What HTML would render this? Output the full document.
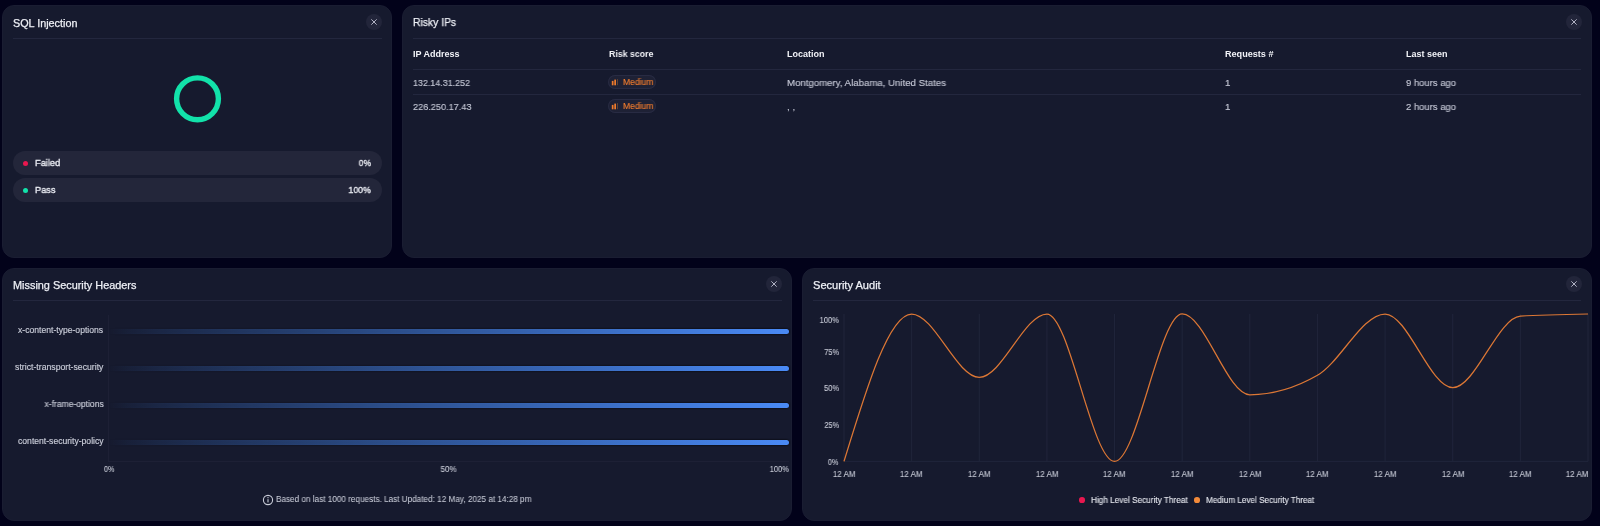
<!DOCTYPE html>
<html><head><meta charset="utf-8"><style>
*{margin:0;padding:0;box-sizing:border-box}
body *{will-change:transform}
html,body{width:1600px;height:526px;overflow:hidden;background:#02021a;font-family:"Liberation Sans",sans-serif}
.card{position:absolute;background:#161a2e;border:1px solid #1a1d32;border-radius:12px}
.t{position:absolute}
.sep{position:absolute;height:1px;background:#23273e}
.close{position:absolute;width:16px;height:16px;border-radius:50%;background:#22253a}
.close svg{position:absolute;left:0;top:0}
.rowsep{position:absolute;left:413px;width:1168px;height:1px;background:#23273e}
.badge{position:absolute;left:608px;width:48px;height:14px;border-radius:7px;background:#1e2135;box-shadow:inset 0 0 0 1px #282b43}
.leg{position:absolute;left:13px;width:369px;height:23.9px;border-radius:12px;background:#23263a}
.bar{position:absolute;left:108px;width:681px;height:5.2px;border-radius:3px;background:linear-gradient(90deg,rgba(74,138,245,0.000) 0%,rgba(74,138,245,0.072) 3%,rgba(74,138,245,0.136) 7%,rgba(74,138,245,0.204) 12%,rgba(74,138,245,0.299) 20%,rgba(74,138,245,0.405) 30%,rgba(74,138,245,0.503) 40%,rgba(74,138,245,0.595) 50%,rgba(74,138,245,0.699) 62%,rgba(74,138,245,0.806) 75%,rgba(74,138,245,0.901) 87%,rgba(74,138,245,1.000) 100%);filter:drop-shadow(0 0 1px #000)}
</style></head><body>
<div class="card" style="left:2px;top:5px;width:390.2px;height:253px"></div>
<div style="position:absolute;top:17.72px;font-size:10.8px;line-height:10.8px;color:#eef0f6;white-space:nowrap;-webkit-text-stroke:0.25px #eef0f6;left:12.90px;transform-origin:0 0;">SQL Injection</div>
<div class="close" style="left:366.3px;top:13.8px"><svg width="16" height="16" viewBox="0 0 16 16"><path d="M5.6 5.6L10.4 10.4M10.4 5.6L5.6 10.4" stroke="#b9bbcb" stroke-width="0.95" stroke-linecap="round"/></svg></div>
<div class="sep" style="left:13px;top:38px;width:369px"></div>
<svg style="position:absolute;left:0;top:0" width="400" height="200"><circle cx="197.5" cy="98.8" r="20.9" fill="none" stroke="#12e2aa" stroke-width="5.4"/></svg>
<div class="leg" style="top:151.1px"></div>
<div class="t" style="left:23.2px;top:160.60px;width:5.2px;height:5.2px;border-radius:50%;background:#e8174f"></div>
<div style="position:absolute;top:158.16px;font-size:9.7px;line-height:9.7px;color:#e9ebf2;white-space:nowrap;-webkit-text-stroke:0.35px #e9ebf2;left:35.00px;transform-origin:0 0;transform:scaleX(0.9572);">Failed</div>
<div style="position:absolute;top:158.16px;font-size:9.7px;line-height:9.7px;color:#e9ebf2;white-space:nowrap;-webkit-text-stroke:0.35px #e9ebf2;left:356.98px;width:14.02px;text-align:right;transform-origin:100% 0;transform:scaleX(0.8775);">0%</div>
<div class="leg" style="top:178px"></div>
<div class="t" style="left:23.2px;top:187.50px;width:5.2px;height:5.2px;border-radius:50%;background:#12e2aa"></div>
<div style="position:absolute;top:185.06px;font-size:9.7px;line-height:9.7px;color:#e9ebf2;white-space:nowrap;-webkit-text-stroke:0.35px #e9ebf2;left:35.00px;transform-origin:0 0;transform:scaleX(0.9498);">Pass</div>
<div style="position:absolute;top:185.06px;font-size:9.7px;line-height:9.7px;color:#e9ebf2;white-space:nowrap;-webkit-text-stroke:0.35px #e9ebf2;left:346.17px;width:24.81px;text-align:right;transform-origin:100% 0;transform:scaleX(0.9021);">100%</div>
<div class="card" style="left:402px;top:5px;width:1189.8px;height:253px"></div>
<div style="position:absolute;top:17.42px;font-size:10.8px;line-height:10.8px;color:#eef0f6;white-space:nowrap;-webkit-text-stroke:0.25px #eef0f6;left:413.00px;transform-origin:0 0;transform:scaleX(0.9582);">Risky IPs</div>
<div class="close" style="left:1565.8px;top:14px"><svg width="16" height="16" viewBox="0 0 16 16"><path d="M5.6 5.6L10.4 10.4M10.4 5.6L5.6 10.4" stroke="#b9bbcb" stroke-width="0.95" stroke-linecap="round"/></svg></div>
<div class="sep" style="left:413px;top:38px;width:1168px"></div>
<div style="position:absolute;top:50.05px;font-size:9px;line-height:9px;color:#f2f3f8;white-space:nowrap;font-weight:bold;left:413.00px;transform-origin:0 0;">IP Address</div>
<div style="position:absolute;top:50.05px;font-size:9px;line-height:9px;color:#f2f3f8;white-space:nowrap;font-weight:bold;left:608.80px;transform-origin:0 0;transform:scaleX(0.9750);">Risk score</div>
<div style="position:absolute;top:50.05px;font-size:9px;line-height:9px;color:#f2f3f8;white-space:nowrap;font-weight:bold;left:786.80px;transform-origin:0 0;">Location</div>
<div style="position:absolute;top:50.05px;font-size:9px;line-height:9px;color:#f2f3f8;white-space:nowrap;font-weight:bold;left:1225.30px;transform-origin:0 0;transform:scaleX(1.0101);">Requests #</div>
<div style="position:absolute;top:50.05px;font-size:9px;line-height:9px;color:#f2f3f8;white-space:nowrap;font-weight:bold;left:1406.30px;transform-origin:0 0;">Last seen</div>
<div class="rowsep" style="top:69.2px"></div><div class="rowsep" style="top:94px"></div>
<div style="position:absolute;top:77.87px;font-size:9.8px;line-height:9.8px;color:#c3c6d4;white-space:nowrap;-webkit-text-stroke:0.15px #c3c6d4;left:413.00px;transform-origin:0 0;transform:scaleX(0.9095);">132.14.31.252</div>
<div class="badge" style="top:75.00px"><svg style="position:absolute;left:3px;top:3px" width="10" height="8" viewBox="0 0 10 8"><rect x="0.8" y="2.9" width="1.7" height="4.4" fill="#ef7b2c"/><rect x="3.3" y="1.6" width="1.7" height="5.7" fill="#ef7b2c"/><rect x="6.1" y="1.1" width="0.9" height="6.1" fill="#6a4632"/></svg></div>
<div style="position:absolute;top:77.92px;font-size:8.8px;line-height:8.8px;color:#f07c2e;white-space:nowrap;-webkit-text-stroke:0.15px #f07c2e;left:622.80px;transform-origin:0 0;transform:scaleX(0.9717);">Medium</div>
<div style="position:absolute;top:77.87px;font-size:9.8px;line-height:9.8px;color:#c3c6d4;white-space:nowrap;-webkit-text-stroke:0.15px #c3c6d4;left:787.00px;transform-origin:0 0;transform:scaleX(0.9839);">Montgomery, Alabama, United States</div>
<div style="position:absolute;top:77.87px;font-size:9.8px;line-height:9.8px;color:#c3c6d4;white-space:nowrap;-webkit-text-stroke:0.15px #c3c6d4;left:1225.20px;transform-origin:0 0;">1</div>
<div style="position:absolute;top:77.87px;font-size:9.8px;line-height:9.8px;color:#c3c6d4;white-space:nowrap;-webkit-text-stroke:0.15px #c3c6d4;left:1406.40px;transform-origin:0 0;transform:scaleX(0.9663);">9 hours ago</div>
<div style="position:absolute;top:102.07px;font-size:9.8px;line-height:9.8px;color:#c3c6d4;white-space:nowrap;-webkit-text-stroke:0.15px #c3c6d4;left:413.00px;transform-origin:0 0;transform:scaleX(0.9334);">226.250.17.43</div>
<div class="badge" style="top:99.20px"><svg style="position:absolute;left:3px;top:3px" width="10" height="8" viewBox="0 0 10 8"><rect x="0.8" y="2.9" width="1.7" height="4.4" fill="#ef7b2c"/><rect x="3.3" y="1.6" width="1.7" height="5.7" fill="#ef7b2c"/><rect x="6.1" y="1.1" width="0.9" height="6.1" fill="#6a4632"/></svg></div>
<div style="position:absolute;top:102.12px;font-size:8.8px;line-height:8.8px;color:#f07c2e;white-space:nowrap;-webkit-text-stroke:0.15px #f07c2e;left:622.80px;transform-origin:0 0;transform:scaleX(0.9717);">Medium</div>
<div style="position:absolute;top:102.07px;font-size:9.8px;line-height:9.8px;color:#c3c6d4;white-space:nowrap;-webkit-text-stroke:0.1px #c3c6d4;left:787.00px;transform-origin:0 0;">, ,</div>
<div style="position:absolute;top:102.07px;font-size:9.8px;line-height:9.8px;color:#c3c6d4;white-space:nowrap;-webkit-text-stroke:0.15px #c3c6d4;left:1225.20px;transform-origin:0 0;">1</div>
<div style="position:absolute;top:102.07px;font-size:9.8px;line-height:9.8px;color:#c3c6d4;white-space:nowrap;-webkit-text-stroke:0.15px #c3c6d4;left:1406.40px;transform-origin:0 0;transform:scaleX(0.9663);">2 hours ago</div>
<div class="card" style="left:2px;top:268px;width:790.2px;height:252.5px"></div>
<div style="position:absolute;top:279.82px;font-size:10.8px;line-height:10.8px;color:#eef0f6;white-space:nowrap;-webkit-text-stroke:0.25px #eef0f6;left:13.40px;transform-origin:0 0;transform:scaleX(1.0084);">Missing Security Headers</div>
<div class="close" style="left:766px;top:276.4px"><svg width="16" height="16" viewBox="0 0 16 16"><path d="M5.6 5.6L10.4 10.4M10.4 5.6L5.6 10.4" stroke="#b9bbcb" stroke-width="0.95" stroke-linecap="round"/></svg></div>
<div class="sep" style="left:13px;top:300px;width:769px"></div>
<div style="position:absolute;left:108px;top:315px;width:1px;height:146px;background:#1d2035"></div>
<div style="position:absolute;left:108px;top:461px;width:681px;height:1px;background:#1d2035"></div>
<div style="position:absolute;top:325.89px;font-size:8.6px;line-height:8.6px;color:#cacdd9;white-space:nowrap;-webkit-text-stroke:0.15px #cacdd9;left:18.30px;width:85.09px;text-align:right;transform-origin:100% 0;">x-content-type-options</div>
<div class="bar" style="top:329.40px"></div>
<div style="position:absolute;top:362.79px;font-size:8.6px;line-height:8.6px;color:#cacdd9;white-space:nowrap;-webkit-text-stroke:0.15px #cacdd9;left:15.94px;width:87.45px;text-align:right;transform-origin:100% 0;transform:scaleX(1.0107);">strict-transport-security</div>
<div class="bar" style="top:366.30px"></div>
<div style="position:absolute;top:399.69px;font-size:8.6px;line-height:8.6px;color:#cacdd9;white-space:nowrap;-webkit-text-stroke:0.15px #cacdd9;left:43.67px;width:59.74px;text-align:right;transform-origin:100% 0;transform:scaleX(0.9912);">x-frame-options</div>
<div class="bar" style="top:403.20px"></div>
<div style="position:absolute;top:436.59px;font-size:8.6px;line-height:8.6px;color:#cacdd9;white-space:nowrap;-webkit-text-stroke:0.15px #cacdd9;left:17.83px;width:85.56px;text-align:right;transform-origin:100% 0;">content-security-policy</div>
<div class="bar" style="top:440.10px"></div>
<div style="position:absolute;top:464.69px;font-size:8.6px;line-height:8.6px;color:#cacdd9;white-space:nowrap;-webkit-text-stroke:0.1px #cacdd9;left:102.69px;width:12.43px;text-align:center;transform-origin:50% 0;transform:scaleX(0.8449);">0%</div>
<div style="position:absolute;top:464.69px;font-size:8.6px;line-height:8.6px;color:#cacdd9;white-space:nowrap;-webkit-text-stroke:0.1px #cacdd9;left:439.89px;width:17.21px;text-align:center;transform-origin:50% 0;transform:scaleX(0.9302);">50%</div>
<div style="position:absolute;top:464.69px;font-size:8.6px;line-height:8.6px;color:#cacdd9;white-space:nowrap;-webkit-text-stroke:0.1px #cacdd9;left:766.59px;width:22.00px;text-align:right;transform-origin:100% 0;transform:scaleX(0.8766);">100%</div>
<svg class="t" style="left:262px;top:494px" width="12" height="12" viewBox="0 0 12 12"><circle cx="6" cy="6" r="4.6" fill="none" stroke="#c9ccd8" stroke-width="1.1"/><rect x="5.45" y="5.2" width="1.1" height="3.2" fill="#c9ccd8"/><circle cx="6" cy="3.7" r="0.65" fill="#c9ccd8"/></svg>
<div style="position:absolute;top:495.29px;font-size:8.6px;line-height:8.6px;color:#cacdd9;white-space:nowrap;-webkit-text-stroke:0.05px #cacdd9;left:275.80px;transform-origin:0 0;transform:scaleX(0.9502);">Based on last 1000 requests. Last Updated: 12 May, 2025 at 14:28 pm</div>
<div class="card" style="left:802px;top:268px;width:789.8px;height:252.5px"></div>
<div style="position:absolute;top:279.82px;font-size:10.8px;line-height:10.8px;color:#eef0f6;white-space:nowrap;-webkit-text-stroke:0.25px #eef0f6;left:812.90px;transform-origin:0 0;transform:scaleX(1.0251);">Security Audit</div>
<div class="close" style="left:1565.8px;top:276.4px"><svg width="16" height="16" viewBox="0 0 16 16"><path d="M5.6 5.6L10.4 10.4M10.4 5.6L5.6 10.4" stroke="#b9bbcb" stroke-width="0.95" stroke-linecap="round"/></svg></div>
<div class="sep" style="left:813px;top:300px;width:768.3px"></div>
<svg style="position:absolute;left:0;top:0" width="1600" height="526"><g stroke="#20253b" stroke-width="1"><line x1="844.00" y1="314" x2="844.00" y2="461.4"/><line x1="911.64" y1="314" x2="911.64" y2="461.4"/><line x1="979.27" y1="314" x2="979.27" y2="461.4"/><line x1="1046.91" y1="314" x2="1046.91" y2="461.4"/><line x1="1114.55" y1="314" x2="1114.55" y2="461.4"/><line x1="1182.18" y1="314" x2="1182.18" y2="461.4"/><line x1="1249.82" y1="314" x2="1249.82" y2="461.4"/><line x1="1317.45" y1="314" x2="1317.45" y2="461.4"/><line x1="1385.09" y1="314" x2="1385.09" y2="461.4"/><line x1="1452.73" y1="314" x2="1452.73" y2="461.4"/><line x1="1520.36" y1="314" x2="1520.36" y2="461.4"/><line x1="1588.00" y1="314" x2="1588.00" y2="461.4"/><line x1="844" y1="461.4" x2="1588" y2="461.4"/></g><path d="M844.00,461.40 C866.55,387.70 889.09,314.00 911.64,314.00 C934.18,314.00 956.73,377.38 979.27,377.38 C1001.82,377.38 1024.36,314.00 1046.91,314.00 C1069.45,314.00 1092.00,461.40 1114.55,461.40 C1137.09,461.40 1159.64,314.00 1182.18,314.00 C1204.73,314.00 1227.27,394.78 1249.82,394.78 C1272.36,394.78 1294.91,388.29 1317.45,375.32 C1340.00,362.35 1362.55,314.00 1385.09,314.00 C1407.64,314.00 1430.18,387.70 1452.73,387.70 C1475.27,387.70 1497.82,317.69 1520.36,316.21 C1542.91,314.74 1565.45,314.37 1588.00,314.00" fill="none" stroke="#dc7735" stroke-width="1.25"/></svg>
<div style="position:absolute;top:315.79px;font-size:8.6px;line-height:8.6px;color:#cacdd9;white-space:nowrap;-webkit-text-stroke:0.1px #cacdd9;left:816.79px;width:22.00px;text-align:right;transform-origin:100% 0;transform:scaleX(0.8812);">100%</div>
<div style="position:absolute;top:347.79px;font-size:8.6px;line-height:8.6px;color:#cacdd9;white-space:nowrap;-webkit-text-stroke:0.1px #cacdd9;left:821.60px;width:17.21px;text-align:right;transform-origin:100% 0;transform:scaleX(0.8721);">75%</div>
<div style="position:absolute;top:384.49px;font-size:8.6px;line-height:8.6px;color:#cacdd9;white-space:nowrap;-webkit-text-stroke:0.1px #cacdd9;left:821.60px;width:17.21px;text-align:right;transform-origin:100% 0;transform:scaleX(0.8779);">50%</div>
<div style="position:absolute;top:421.29px;font-size:8.6px;line-height:8.6px;color:#cacdd9;white-space:nowrap;-webkit-text-stroke:0.1px #cacdd9;left:821.60px;width:17.21px;text-align:right;transform-origin:100% 0;transform:scaleX(0.8605);">25%</div>
<div style="position:absolute;top:457.89px;font-size:8.6px;line-height:8.6px;color:#cacdd9;white-space:nowrap;-webkit-text-stroke:0.1px #cacdd9;left:826.37px;width:12.43px;text-align:right;transform-origin:100% 0;transform:scaleX(0.8530);">0%</div>
<div style="position:absolute;top:469.69px;font-size:8.6px;line-height:8.6px;color:#cacdd9;white-space:nowrap;-webkit-text-stroke:0.1px #cacdd9;left:831.81px;width:24.38px;text-align:center;transform-origin:50% 0;transform:scaleX(0.9270);">12 AM</div>
<div style="position:absolute;top:469.69px;font-size:8.6px;line-height:8.6px;color:#cacdd9;white-space:nowrap;-webkit-text-stroke:0.1px #cacdd9;left:899.45px;width:24.38px;text-align:center;transform-origin:50% 0;transform:scaleX(0.9270);">12 AM</div>
<div style="position:absolute;top:469.69px;font-size:8.6px;line-height:8.6px;color:#cacdd9;white-space:nowrap;-webkit-text-stroke:0.1px #cacdd9;left:967.08px;width:24.38px;text-align:center;transform-origin:50% 0;transform:scaleX(0.9270);">12 AM</div>
<div style="position:absolute;top:469.69px;font-size:8.6px;line-height:8.6px;color:#cacdd9;white-space:nowrap;-webkit-text-stroke:0.1px #cacdd9;left:1034.72px;width:24.38px;text-align:center;transform-origin:50% 0;transform:scaleX(0.9270);">12 AM</div>
<div style="position:absolute;top:469.69px;font-size:8.6px;line-height:8.6px;color:#cacdd9;white-space:nowrap;-webkit-text-stroke:0.1px #cacdd9;left:1102.35px;width:24.38px;text-align:center;transform-origin:50% 0;transform:scaleX(0.9270);">12 AM</div>
<div style="position:absolute;top:469.69px;font-size:8.6px;line-height:8.6px;color:#cacdd9;white-space:nowrap;-webkit-text-stroke:0.1px #cacdd9;left:1169.99px;width:24.38px;text-align:center;transform-origin:50% 0;transform:scaleX(0.9270);">12 AM</div>
<div style="position:absolute;top:469.69px;font-size:8.6px;line-height:8.6px;color:#cacdd9;white-space:nowrap;-webkit-text-stroke:0.1px #cacdd9;left:1237.63px;width:24.38px;text-align:center;transform-origin:50% 0;transform:scaleX(0.9270);">12 AM</div>
<div style="position:absolute;top:469.69px;font-size:8.6px;line-height:8.6px;color:#cacdd9;white-space:nowrap;-webkit-text-stroke:0.1px #cacdd9;left:1305.26px;width:24.38px;text-align:center;transform-origin:50% 0;transform:scaleX(0.9270);">12 AM</div>
<div style="position:absolute;top:469.69px;font-size:8.6px;line-height:8.6px;color:#cacdd9;white-space:nowrap;-webkit-text-stroke:0.1px #cacdd9;left:1372.90px;width:24.38px;text-align:center;transform-origin:50% 0;transform:scaleX(0.9270);">12 AM</div>
<div style="position:absolute;top:469.69px;font-size:8.6px;line-height:8.6px;color:#cacdd9;white-space:nowrap;-webkit-text-stroke:0.1px #cacdd9;left:1440.54px;width:24.38px;text-align:center;transform-origin:50% 0;transform:scaleX(0.9270);">12 AM</div>
<div style="position:absolute;top:469.69px;font-size:8.6px;line-height:8.6px;color:#cacdd9;white-space:nowrap;-webkit-text-stroke:0.1px #cacdd9;left:1508.17px;width:24.38px;text-align:center;transform-origin:50% 0;transform:scaleX(0.9270);">12 AM</div>
<div style="position:absolute;top:469.69px;font-size:8.6px;line-height:8.6px;color:#cacdd9;white-space:nowrap;-webkit-text-stroke:0.1px #cacdd9;left:1563.62px;width:24.38px;text-align:right;transform-origin:100% 0;transform:scaleX(0.9270);">12 AM</div>
<div class="t" style="left:1079.1px;top:497.2px;width:5.7px;height:5.7px;border-radius:50%;background:#e8174f"></div>
<div style="position:absolute;top:495.89px;font-size:8.6px;line-height:8.6px;color:#e9ebf2;white-space:nowrap;-webkit-text-stroke:0.1px #e9ebf2;left:1090.60px;transform-origin:0 0;transform:scaleX(0.9557);">High Level Security Threat</div>
<div class="t" style="left:1193.6px;top:497.2px;width:5.7px;height:5.7px;border-radius:50%;background:#f28a3a"></div>
<div style="position:absolute;top:495.89px;font-size:8.6px;line-height:8.6px;color:#e9ebf2;white-space:nowrap;-webkit-text-stroke:0.1px #e9ebf2;left:1205.70px;transform-origin:0 0;transform:scaleX(0.9502);">Medium Level Security Threat</div>
</body></html>
